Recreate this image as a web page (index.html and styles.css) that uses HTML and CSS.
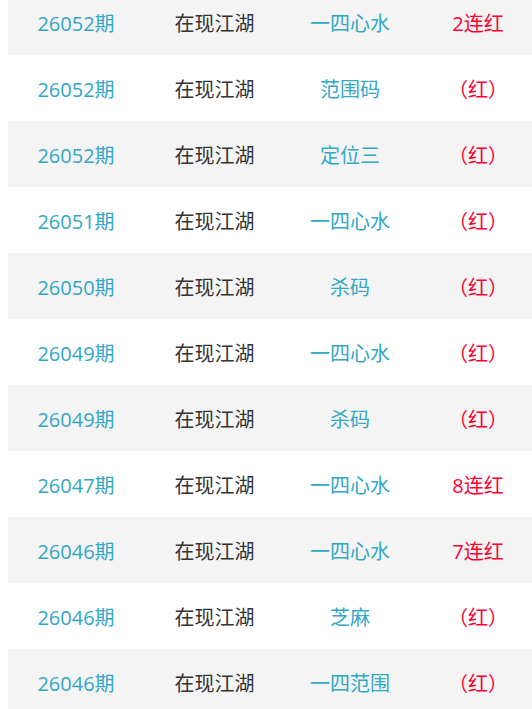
FILE: index.html
```html
<!DOCTYPE html>
<html lang="zh-CN">
<head>
<meta charset="utf-8">
<link rel="stylesheet" href="styles.css">
</head>
<body>
<div class="list">
  <div class="row"><span class="c1">26052期</span><span class="c2">在现江湖</span><span class="c3">一四心水</span><span class="c4">2连红</span></div>
  <div class="row"><span class="c1">26052期</span><span class="c2">在现江湖</span><span class="c3">范围码</span><span class="c4">（红）</span></div>
  <div class="row"><span class="c1">26052期</span><span class="c2">在现江湖</span><span class="c3">定位三</span><span class="c4">（红）</span></div>
  <div class="row"><span class="c1">26051期</span><span class="c2">在现江湖</span><span class="c3">一四心水</span><span class="c4">（红）</span></div>
  <div class="row"><span class="c1">26050期</span><span class="c2">在现江湖</span><span class="c3">杀码</span><span class="c4">（红）</span></div>
  <div class="row"><span class="c1">26049期</span><span class="c2">在现江湖</span><span class="c3">一四心水</span><span class="c4">（红）</span></div>
  <div class="row"><span class="c1">26049期</span><span class="c2">在现江湖</span><span class="c3">杀码</span><span class="c4">（红）</span></div>
  <div class="row"><span class="c1">26047期</span><span class="c2">在现江湖</span><span class="c3">一四心水</span><span class="c4">8连红</span></div>
  <div class="row"><span class="c1">26046期</span><span class="c2">在现江湖</span><span class="c3">一四心水</span><span class="c4">7连红</span></div>
  <div class="row"><span class="c1">26046期</span><span class="c2">在现江湖</span><span class="c3">芝麻</span><span class="c4">（红）</span></div>
  <div class="row"><span class="c1">26046期</span><span class="c2">在现江湖</span><span class="c3">一四范围</span><span class="c4">（红）</span></div>
</div>
</body>
</html>
```
FILE: styles.css
```css
html, body {
  margin: 0;
  padding: 0;
  overflow: hidden;
  background: #ffffff;
}
body {
  font-family: "Open Sans", "Noto Sans CJK SC", sans-serif;
  font-size: 20px;
  font-weight: 400;
}
.list {
  margin: -11px 0 0 8px;
  width: 533px;
}
.row {
  display: grid;
  grid-template-columns: 136px 141px 130px 126px;
  height: 66px;
  box-sizing: border-box;
  padding-top: 1px;
  align-items: center;
  text-align: center;
}
.row:nth-child(odd) {
  background: #f4f4f4;
}
.c1 { color: #33a7c4; }
.c2 { color: #333333; }
.c3 { color: #33a7c4; }
.c4 { color: #ff0033; }
```
